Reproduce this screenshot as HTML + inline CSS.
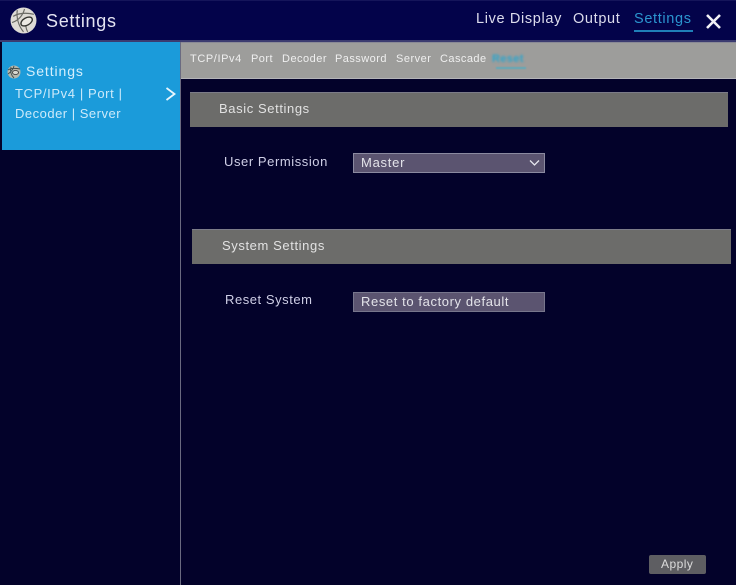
<!DOCTYPE html>
<html>
<head>
<meta charset="utf-8">
<style>
html,body{margin:0;padding:0;background:#03022a;}
#p{position:relative;width:736px;height:585px;overflow:hidden;background:#03022a;font-family:"Liberation Sans",Arial,sans-serif;color:#ddd;filter:blur(.35px);}
#p div{position:absolute;white-space:nowrap;}
.t{line-height:1;}
</style>
</head>
<body>
<div id="p">
  <div style="left:0;top:0;width:736px;height:41px;background:#03034a;border-top:1px solid #15155a;box-sizing:border-box;"></div>
  <div style="left:0;top:40px;width:736px;height:2px;background:#3b3b70;"></div>
  <svg style="position:absolute;left:10px;top:7px" width="27" height="27" viewBox="0 0 26 26">
    <circle cx="13" cy="13" r="12.5" fill="#dedbd5"/>
    <path d="M3 9C8 6 14 5 23 7M2 15C8 13 12 9 14 2M7 3C6 10 8 18 13 24M17 24C15 20 15 18 16 15" fill="none" stroke="#6a6a64" stroke-width="1.1"/>
    <ellipse cx="16" cy="14" rx="6" ry="3.5" transform="rotate(-30 16 14)" fill="#ece9e3" stroke="#33332f" stroke-width="1.3"/>
  </svg>
  <div class="t" style="left:46px;top:12px;font-size:18px;letter-spacing:.7px;color:#e4e4f2;">Settings</div>
  <div class="t" style="left:476px;top:12px;font-size:14.5px;letter-spacing:.65px;color:#dcdcec;">Live Display</div>
  <div class="t" style="left:573px;top:12px;font-size:14.5px;letter-spacing:.65px;color:#dcdcec;">Output</div>
  <div class="t" style="left:634px;top:12px;font-size:14.5px;letter-spacing:.65px;color:#2b95cf;">Settings</div>
  <div style="left:634px;top:30px;width:59px;height:1.5px;background:#1f7fb8;"></div>
  <svg style="position:absolute;left:705px;top:13px" width="17" height="17" viewBox="0 0 17 17"><path d="M2 2L15 15M15 2L2 15" stroke="#f2f2f6" stroke-width="2.6" fill="none"/></svg>

  <div style="left:2px;top:42px;width:178px;height:108px;background:#1b9bda;"></div>
  <div style="left:180px;top:42px;width:1px;height:543px;background:#6a6a80;"></div>
  <svg style="position:absolute;left:7px;top:65px" width="14" height="14" viewBox="0 0 14 14">
    <circle cx="7" cy="7" r="6.5" fill="#b5b8ad"/>
    <path d="M1 5C4 3 8 3 13 4M1 9C4 7 6 5 7 1M4 2C3 6 4 10 7 13" fill="none" stroke="#3e4a4a" stroke-width=".9"/>
    <ellipse cx="8.5" cy="7.5" rx="3" ry="2" fill="#d8d8d0" stroke="#333" stroke-width=".8"/>
  </svg>
  <div class="t" style="left:26px;top:64px;font-size:14px;letter-spacing:.9px;color:#d4effc;">Settings</div>
  <div class="t" style="left:15px;top:87px;font-size:13px;letter-spacing:.62px;color:#cdeafa;">TCP/IPv4 | Port |</div>
  <div class="t" style="left:15px;top:107px;font-size:13px;letter-spacing:.5px;color:#cdeafa;">Decoder | Server</div>
  <svg style="position:absolute;left:164px;top:86px" width="13" height="16" viewBox="0 0 13 16"><path d="M2.5 2L10.5 8L2.5 14" stroke="#e8f6fd" stroke-width="1.8" fill="none"/></svg>

  <div style="left:181px;top:42px;width:555px;height:37px;background:#9d9d9b;border-bottom:1px solid #b4b4b8;border-top:1px solid #8a8a96;box-sizing:border-box;"></div>
  <div class="t" style="left:190px;top:54px;font-size:11px;letter-spacing:.6px;color:#efefef;">TCP/IPv4</div>
  <div class="t" style="left:251px;top:54px;font-size:11px;letter-spacing:.45px;color:#efefef;">Port</div>
  <div class="t" style="left:282px;top:54px;font-size:11px;letter-spacing:.5px;color:#efefef;">Decoder</div>
  <div class="t" style="left:335px;top:54px;font-size:11px;letter-spacing:.45px;color:#efefef;">Password</div>
  <div class="t" style="left:396px;top:54px;font-size:11px;letter-spacing:.5px;color:#efefef;">Server</div>
  <div class="t" style="left:440px;top:54px;font-size:11px;letter-spacing:.45px;color:#efefef;">Cascade</div>
  <div class="t" style="left:492px;top:54px;font-size:11px;letter-spacing:.35px;color:#2fa5cc;font-weight:bold;filter:blur(1px);">Reset</div>
  <div style="left:496px;top:67px;width:30px;height:2px;background:#62a9b8;filter:blur(.6px);"></div>

  <div style="left:190px;top:92px;width:538px;height:35px;background:#6c6c6a;border-top:1px solid #7c7c88;box-sizing:border-box;"></div>
  <div class="t" style="left:219px;top:102px;font-size:13px;letter-spacing:.6px;color:#e2e2e2;">Basic Settings</div>
  <div class="t" style="left:224px;top:155px;font-size:13px;letter-spacing:.57px;color:#cfcfe6;">User Permission</div>
  <div style="left:353px;top:153px;width:192px;height:20px;background:#5b5470;border:1px solid #8b8aa0;box-sizing:border-box;"></div>
  <div class="t" style="left:361px;top:156px;font-size:13px;letter-spacing:.75px;color:#e4e4ea;">Master</div>
  <svg style="position:absolute;left:528px;top:158px" width="13" height="10" viewBox="0 0 13 10"><path d="M2 2.5L6.5 7L11 2.5" stroke="#e6e6ee" stroke-width="1.3" fill="none"/></svg>

  <div style="left:192px;top:229px;width:539px;height:35px;background:#6c6c6a;border-top:1px solid #7c7c88;box-sizing:border-box;"></div>
  <div class="t" style="left:222px;top:239px;font-size:13px;letter-spacing:.6px;color:#e2e2e2;">System Settings</div>
  <div class="t" style="left:225px;top:293px;font-size:13px;letter-spacing:.55px;color:#cfcfe6;">Reset System</div>
  <div style="left:353px;top:292px;width:192px;height:20px;background:#5b5470;border:1px solid #77768c;box-sizing:border-box;"></div>
  <div class="t" style="left:361px;top:295px;font-size:13px;letter-spacing:.6px;color:#e4e4ea;">Reset to factory default</div>

  <div style="left:649px;top:555px;width:57px;height:19px;background:#5e5e62;border-radius:2px;"></div>
  <div class="t" style="left:661px;top:558px;font-size:12px;letter-spacing:.45px;color:#dcdcdc;">Apply</div>
</div>
</body>
</html>
